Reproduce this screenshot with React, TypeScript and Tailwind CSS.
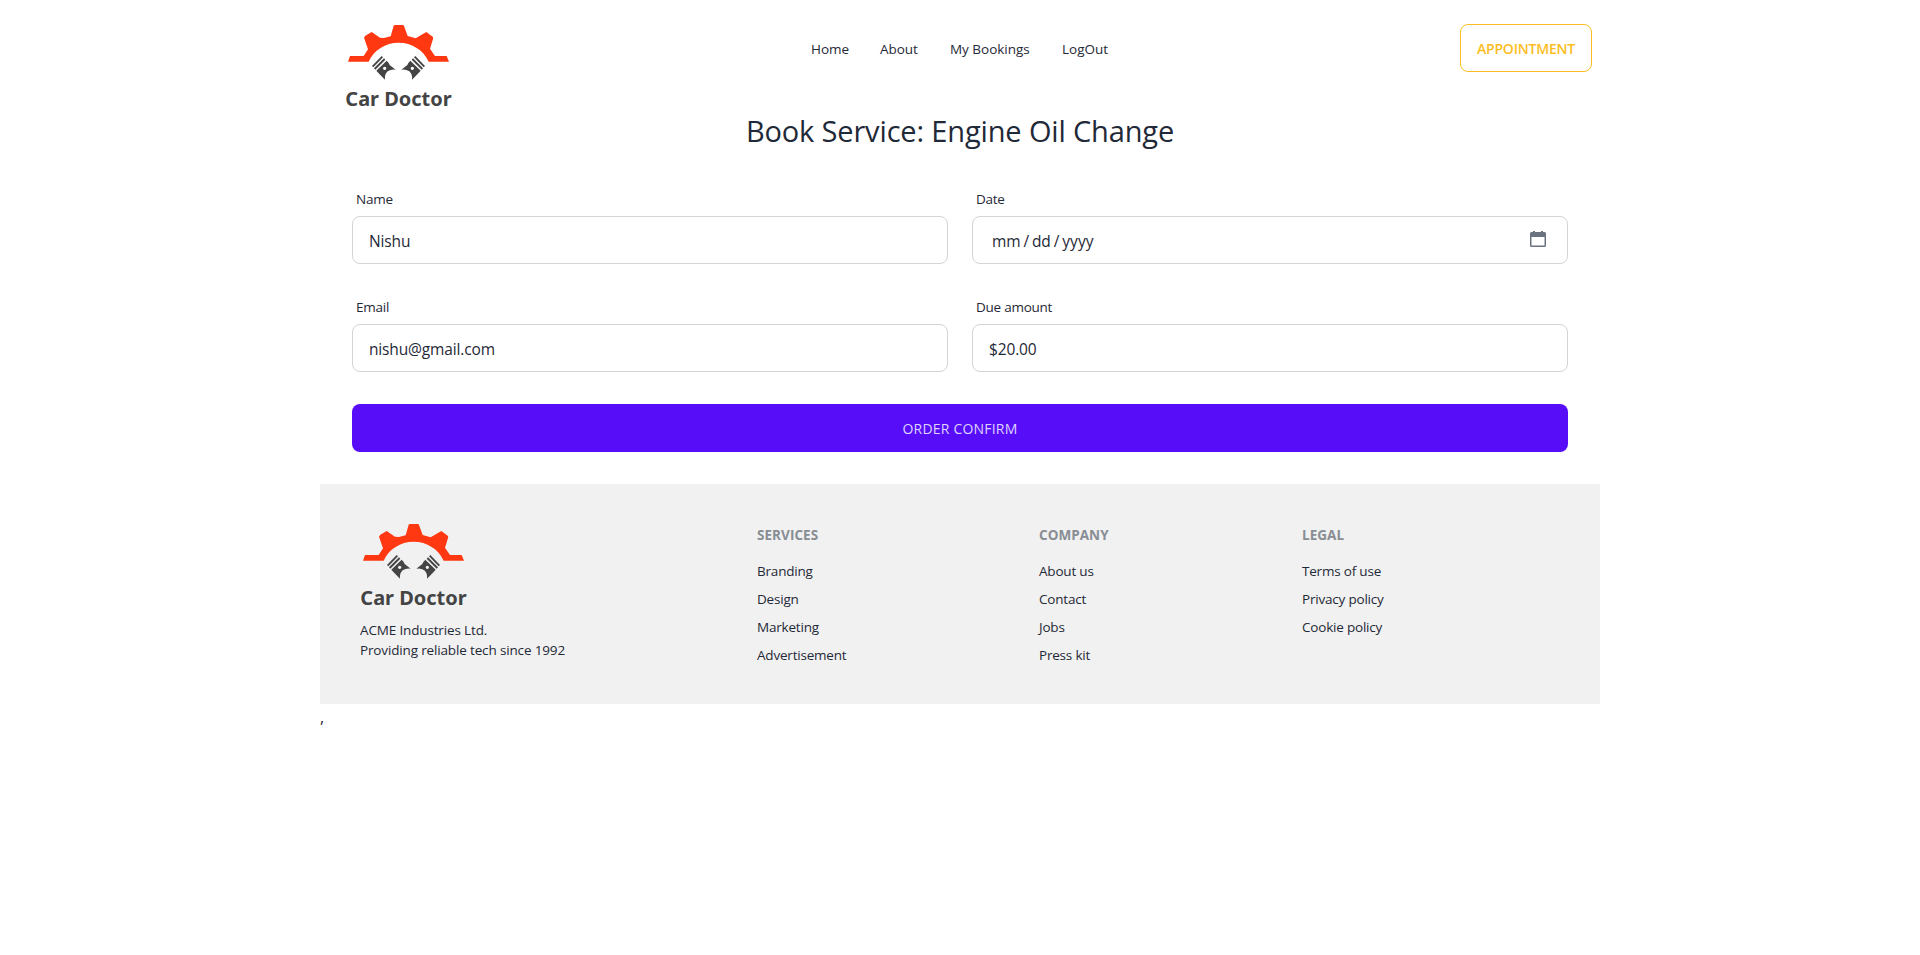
import React from "react";

function Logo() {
  return (
    <svg width="108" height="86" viewBox="45 42 324 258" className="block shrink-0 overflow-visible">
      <path
        fill="#ff3811"
        d="M54 155 L60 138 L101 138 L114 118 L102 83 L106 77 L125 66 L150 83 L162 84 L182 79 L191 47 Q192 45 195 45 L218 45 Q221 45 222 48 L233 78 L257 85 L289 66 L308 80 Q311 82 309 87 L300 116 L315 138 L350 138 L357 155 L296 155 C280 120 246 98 206 98 C166 98 132 120 116 155 Z"
      />
      <g fill="#444444">
        <path d="M126 168 L155 138 L159 142 L130 172 Z" />
        <path d="M132 175 L162 145 L166 149 L136 179 Z" />
        <path fillRule="evenodd" d="M139 182 L170 152 L176 159 L179 165 L197 179 Q185 176 173 184 Q163 193 165 209 L148 192 Z M159 175 a5 5 0 1 0 10 0 a5 5 0 1 0 -10 0 Z" />
        <path d="M285 168 L256 138 L252 142 L281 172 Z" />
        <path d="M279 175 L249 145 L245 149 L275 179 Z" />
        <path fillRule="evenodd" d="M272 182 L241 152 L235 159 L232 165 L214 179 Q226 176 238 184 Q248 193 246 209 L263 192 Z M242 175 a5 5 0 1 0 10 0 a5 5 0 1 0 -10 0 Z" />
      </g>
      <text
        x="46"
        y="287"
        fill="#444444"
        fontSize="58.5"
        fontWeight="700"
        textLength="319"
        lengthAdjust="spacingAndGlyphs"
        style={{ fontFamily: '"Noto Sans", "Open Sans", sans-serif' }}
      >
        Car Doctor
      </text>
    </svg>
  );
}

function Field({ label, children }: { label: string; children: React.ReactNode }) {
  return (
    <div className="flex flex-col">
      <label className="flex h-9 items-center px-1 pt-0.5 text-[13.5px] tracking-[-0.25px]">{label}</label>
      <div className="flex h-12 items-center rounded-lg border border-[#d2d4d7] px-4 pt-[3px] text-[15.5px] tracking-[-0.15px]">
        {children}
      </div>
    </div>
  );
}

function Column({ title, items }: { title: string; items: string[] }) {
  return (
    <nav className="flex flex-col gap-2 pt-[2px]">
      <h6 className="mb-2 h-5 text-[13.5px] font-bold leading-5 tracking-[0.05px] text-[#888d94]">{title}</h6>
      {items.map((item) => (
        <a key={item} className="h-5 text-[13.5px] leading-5 tracking-[-0.2px]">
          {item}
        </a>
      ))}
    </nav>
  );
}

export default function App() {
  return (
    <div className="min-h-[955px] bg-white font-['Open_Sans','Noto_Sans',sans-serif] text-[#1f2937]">
      <div className="mx-auto w-[1280px]">
        <header className="flex h-24 items-start justify-between pl-[25px] pr-2 pt-6">
          <div className="w-[450px]">
            <Logo />
          </div>
          <ul className="flex h-12 w-[330px] items-center pt-0.5 text-[13.5px] tracking-[-0.02px]">
            <li className="w-[69px] pl-4">Home</li>
            <li className="w-[70px] pl-4">About</li>
            <li className="w-[112px] whitespace-nowrap pl-4">My Bookings</li>
            <li className="w-[79px] pl-4">LogOut</li>
          </ul>
          <div className="flex w-[467px] justify-end">
            <button className="h-12 w-[132px] rounded-lg border border-[#fbbd23] text-[14px] font-semibold tracking-[-0.2px] text-[#fbbd23]">
              APPOINTMENT
            </button>
          </div>
        </header>
        <main>
          <h2 className="h-[72px] pt-[17px] text-center text-[29px] leading-9 tracking-[-0.15px]">
            Book Service: Engine Oil Change
          </h2>
          <form className="px-8 pt-3">
            <div className="grid grid-cols-2 gap-6">
              <Field label="Name">Nishu</Field>
              <Field label="Date">
                <span className="flex flex-1 items-center pl-[3px]">
                  <span>mm</span>
                  <span className="px-[3px]">/</span>
                  <span>dd</span>
                  <span className="px-[3px]">/</span>
                  <span className="tracking-[0.1px]">yyyy</span>
                </span>
                <svg width="16" height="16" viewBox="0 0 16 16" className="mb-[5px] mr-[5px]">
                  <path
                    fill="#6b7280"
                    fillRule="evenodd"
                    d="M3 0H5V1H11V0H13V1H14.5Q16 1 16 2.5V14.5Q16 16 14.5 16H1.5Q0 16 0 14.5V2.5Q0 1 1.5 1H3ZM1.5 6V14.5H14.5V6Z"
                  />
                </svg>
              </Field>
              <Field label="Email">nishu@gmail.com</Field>
              <Field label="Due amount">$20.00</Field>
            </div>
            <button className="mt-8 h-12 w-full rounded-lg bg-[#570df8] text-[14px] font-medium tracking-[0.2px] text-[#dfd3fe]">
              ORDER CONFIRM
            </button>
          </form>
        </main>
        <footer className="mt-8 grid h-[220px] grid-cols-[397px_282px_263px_1fr] bg-[#f1f1f1] px-10 pt-[39px]">
          <div>
            <Logo />
            <p className="mt-[11px] text-[13.5px] leading-5 tracking-[-0.15px]">
              ACME Industries Ltd.
              <br />
              Providing reliable tech since 1992
            </p>
          </div>
          <Column title="SERVICES" items={["Branding", "Design", "Marketing", "Advertisement"]} />
          <Column title="COMPANY" items={["About us", "Contact", "Jobs", "Press kit"]} />
          <Column title="LEGAL" items={["Terms of use", "Privacy policy", "Cookie policy"]} />
        </footer>
        <p className="pt-px text-base leading-6">,</p>
      </div>
    </div>
  );
}
